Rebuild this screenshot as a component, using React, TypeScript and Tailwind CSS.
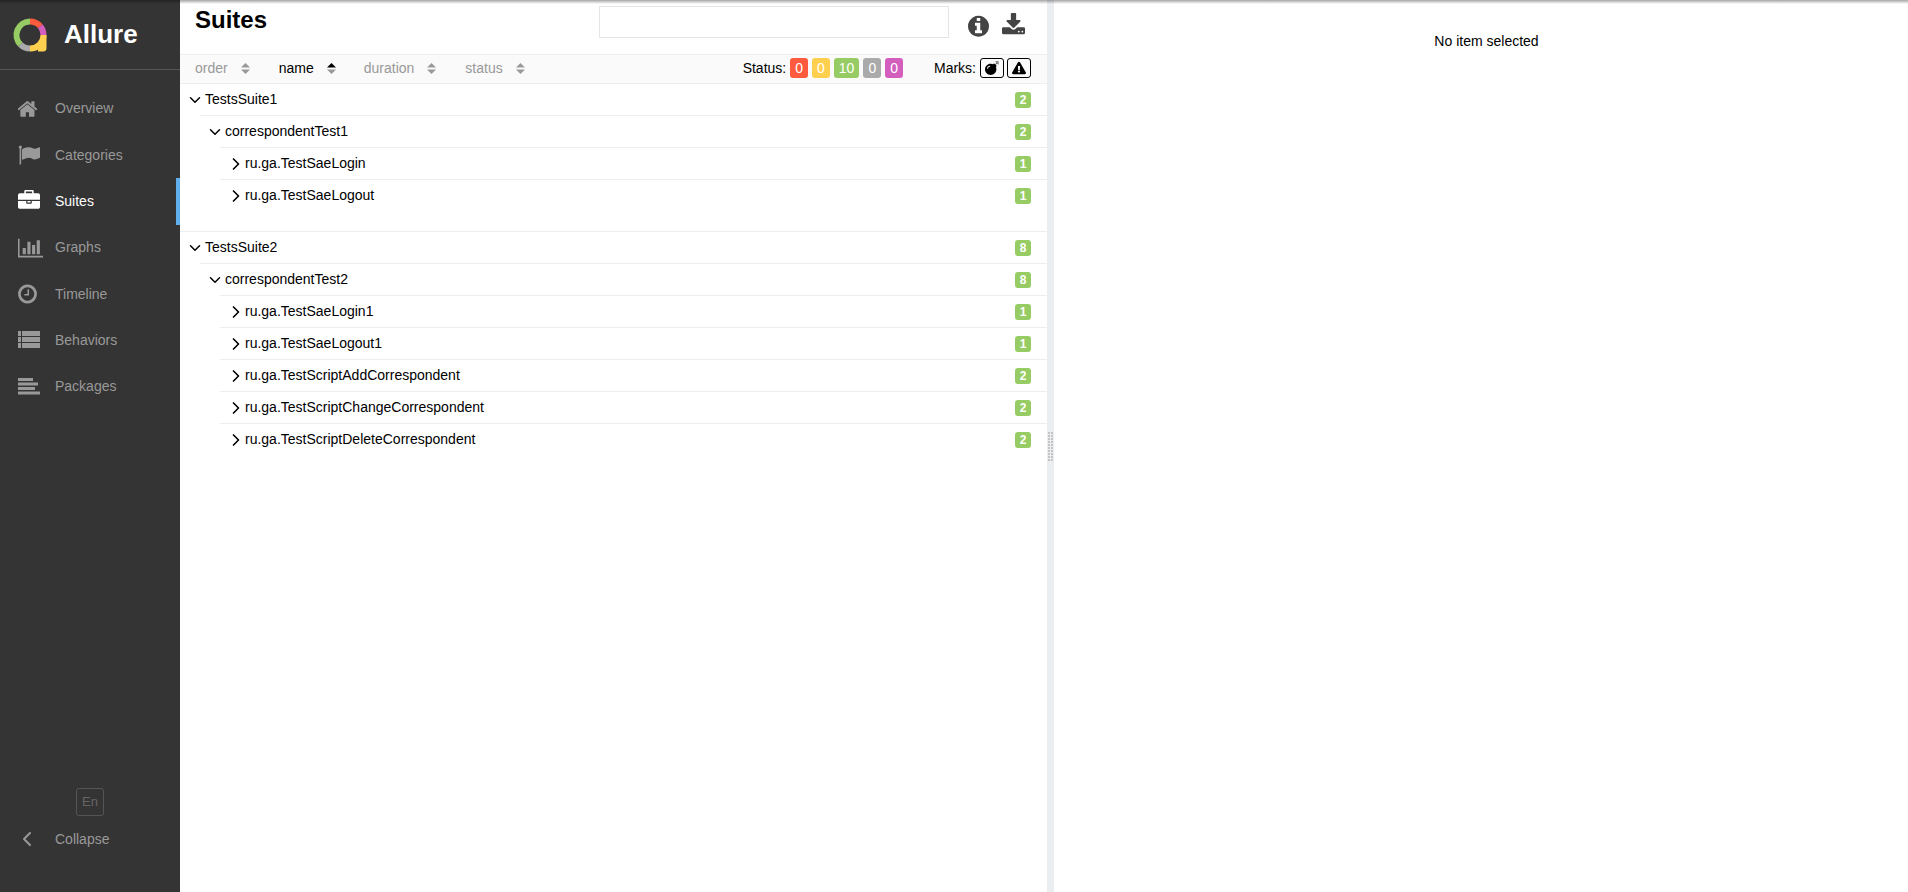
import type { ReactNode } from "react"
import { FaBomb, FaExclamationTriangle } from "react-icons/fa"
import { ChevronDown, ChevronLeft, ChevronRight } from "lucide-react"

function HomeIcon() {
  return (
    <svg viewBox="64 0 1664 1792" fill="currentColor" className="h-[22px] w-[20.4px]">
      <path d="M1408 992v480q0 26-19 45t-45 19h-384v-384h-256v384h-384q-26 0-45-19t-19-45v-480q0-1 .5-3t.5-3l575-474 575 474q1 2 1 6zm223-69l-62 74q-8 9-21 11h-3q-13 0-21-7l-692-577-692 577q-12 8-24 7-13-2-21-11l-62-74q-8-10-7-23.5t11-21.5l719-599q32-26 76-26t76 26l244 204v-195q0-14 9-23t23-9h192q14 0 23 9t9 23v408l219 182q10 8 11 21.5t-7 23.5z" />
    </svg>
  )
}

function FlagIcon() {
  return (
    <svg viewBox="0 0 1792 1792" fill="currentColor" className="h-[22px] w-[22px]">
      <path d="M320 256q0 72-64 110v1266q0 13-9.5 22.5t-22.5 9.5h-64q-13 0-22.5-9.5t-9.5-22.5v-1266q-64-38-64-110 0-53 37.5-90.5t90.5-37.5 90.5 37.5 37.5 90.5zm1472 64v763q0 25-12.5 38.5t-39.5 27.5q-215 116-369 116-61 0-123.5-22t-108.5-48-115.5-48-142.5-22q-192 0-464 146-17 9-33 9-26 0-45-19t-19-45v-742q0-32 31-55 21-14 79-43 236-120 421-120 107 0 200 29t219 88q38 19 88 19 54 0 117.5-21t110-47 88-47 54.5-21q26 0 45 19t19 45z" />
    </svg>
  )
}

function BriefcaseIcon() {
  return (
    <svg viewBox="0 0 1792 1792" fill="currentColor" className="h-[22px] w-[22px]">
      <path d="M640 256h512v-128h-512v128zm1152 640v480q0 66-47 113t-113 47h-1472q-66 0-113-47t-47-113v-480h672v160q0 26 19 45t45 19h320q26 0 45-19t19-45v-160h672zm-768 0v128h-256v-128h256zm768-480v384h-1792v-384q0-66 47-113t113-47h352v-160q0-40 28-68t68-28h576q40 0 68 28t28 68v160h352q66 0 113 47t47 113z" />
    </svg>
  )
}

function GraphIcon() {
  return (
    <svg viewBox="0 0 2048 1792" fill="currentColor" className="h-[22px] w-[25px]">
      <path d="M640 896v512h-256v-512h256zm384-512v1024h-256v-1024h256zm1024 1152v128h-2048v-1536h128v1408h1920zm-640-896v768h-256v-768h256zm384-384v1152h-256v-1152h256z" />
    </svg>
  )
}

function ClockIcon() {
  return (
    <svg viewBox="128 0 1536 1792" fill="currentColor" className="h-[22px] w-[19px]">
      <path d="M1024 544v448q0 14-9 23t-23 9h-320q-14 0-23-9t-9-23v-64q0-14 9-23t23-9h224v-352q0-14 9-23t23-9h64q14 0 23 9t9 23zm416 352q0-148-73-273t-198-198-273-73-273 73-198 198-73 273 73 273 198 198 273 73 273-73 198-198 73-273zm224 0q0 209-103 385.5t-279.5 279.5-385.5 103-385.5-103-279.5-279.5-103-385.5 103-385.5 279.5-279.5 385.5-103 385.5 103 279.5 279.5 103 385.5z" />
    </svg>
  )
}

function ListIcon() {
  return (
    <svg viewBox="0 0 22 18" fill="currentColor" className="h-[18px] w-[22px]">
      <rect x="0" y="0" width="3" height="5" />
      <rect x="4" y="0" width="18" height="5" />
      <rect x="0" y="6" width="3" height="5" />
      <rect x="4" y="6" width="18" height="5" />
      <rect x="0" y="12" width="3" height="5" />
      <rect x="4" y="12" width="18" height="5" />
    </svg>
  )
}

function PackagesIcon() {
  return (
    <svg viewBox="0 0 22 18" fill="currentColor" className="h-[18px] w-[22px]">
      <rect x="0" y="0" width="15" height="3" />
      <rect x="0" y="4.5" width="20" height="3" />
      <rect x="0" y="9" width="17" height="3" />
      <rect x="0" y="13.5" width="22" height="3" />
    </svg>
  )
}

function InfoIcon() {
  return (
    <svg viewBox="128 0 1536 1792" fill="currentColor" className="ml-[19px] mt-[14px] h-[24.5px] w-[21px] text-[#444444]">
      <path d="M1152 1376v-160q0-14-9-23t-23-9h-96v-512q0-14-9-23t-23-9h-320q-14 0-23 9t-9 23v160q0 14 9 23t23 9h96v320h-96q-14 0-23 9t-9 23v160q0 14 9 23t23 9h448q14 0 23-9t9-23zm-128-896v-160q0-14-9-23t-23-9h-192q-14 0-23 9t-9 23v160q0 14 9 23t23 9h192q14 0 23-9t9-23zm640 416q0 209-103 385.5t-279.5 279.5-385.5 103-385.5-103-279.5-279.5-103-385.5 103-385.5 279.5-279.5 385.5-103 385.5 103 279.5 279.5 103 385.5z" />
    </svg>
  )
}

function DownloadIcon() {
  return (
    <svg viewBox="64 0 1664 1792" fill="currentColor" className="ml-[13px] mt-[13px] h-[24.8px] w-[23px] text-[#444444]">
      <path d="M1344 1344q0-26-19-45t-45-19-45 19-19 45 19 45 45 19 45-19 19-45zm256 0q0-26-19-45t-45-19-45 19-19 45 19 45 45 19 45-19 19-45zm128-224v320q0 40-28 68t-68 28h-1472q-40 0-68-28t-28-68v-320q0-40 28-68t68-28h465l135 136q58 56 136 56t136-56l136-136h464q40 0 68 28t28 68zm-325-569q17 41-14 70l-448 448q-18 19-45 19t-45-19l-448-448q-31-29-14-70 17-39 59-39h256v-448q0-26 19-45t45-19h256q26 0 45 19t19 45v448h256q42 0 59 39z" />
    </svg>
  )
}

const navItems = [
  { label: "Overview", icon: <HomeIcon /> },
  { label: "Categories", icon: <FlagIcon /> },
  { label: "Suites", icon: <BriefcaseIcon />, active: true },
  { label: "Graphs", icon: <GraphIcon /> },
  { label: "Timeline", icon: <ClockIcon /> },
  { label: "Behaviors", icon: <ListIcon /> },
  { label: "Packages", icon: <PackagesIcon /> },
]

const sorters = [
  { label: "order", gap: "mr-[29px]" },
  { label: "name", active: true, gap: "mr-[28px]" },
  { label: "duration", gap: "mr-[29px]" },
  { label: "status", gap: "mr-[28px]" },
]

const statuses = [
  { value: 0, color: "bg-[#fd5a3e]" },
  { value: 0, color: "bg-[#ffd050]" },
  { value: 10, color: "bg-[#97cc64]" },
  { value: 0, color: "bg-[#aaaaaa]" },
  { value: 0, color: "bg-[#d35ebe]" },
]

function Logo() {
  return (
    <svg viewBox="0 0 36 36" className="h-[36px] w-[36px] shrink-0">
      <path d="M18 4.5 A13.5 13.5 0 0 1 28.3 9.3" fill="none" stroke="#fd5a3e" strokeWidth="6" />
      <path d="M28.3 9.3 A13.5 13.5 0 0 1 31.5 18" fill="none" stroke="#d35ebe" strokeWidth="6" />
      <path d="M31.5 18 A13.5 13.5 0 0 1 18 31.5" fill="none" stroke="#ffd050" strokeWidth="6" />
      <path d="M34.5 18 L34.5 31 Q34.5 34.5 31 34.5 L26 34.5 L26 28 Z" fill="#ffd050" />
      <path d="M18 31.5 A13.5 13.5 0 0 1 8.3 27.4" fill="none" stroke="#aaaaaa" strokeWidth="6" />
      <path d="M8.3 27.4 A13.5 13.5 0 0 1 18 4.5" fill="none" stroke="#97cc64" strokeWidth="6" />
    </svg>
  )
}

function SortIcon({ active, gap }: { active?: boolean; gap: string }) {
  return (
    <svg viewBox="0 0 10 12" className={`ml-[13px] h-[11px] w-[9px] shrink-0 ${gap}`}>
      <path d="M5 0 L10 5 L0 5 Z" fill={active ? "#000000" : "#999999"} />
      <path d="M0 7 L10 7 L5 12 Z" fill="#999999" />
    </svg>
  )
}

function TreeRow({ level, label, count, open }: { level: 0 | 1 | 2; label: string; count: number; open?: boolean }) {
  const indent = level === 0 ? "ml-0 pl-[10px]" : level === 1 ? "ml-[20px] pl-[10px]" : "ml-[40px] pl-[10px]"
  return (
    <div className={`flex h-[32px] items-center border-t border-[#eeeeee] pr-[16px] ${indent}`}>
      <span className="flex w-[15px] shrink-0 items-center">
        {open ? (
          <ChevronDown className="ml-[-4px] h-[18px] w-[18px] shrink-0" strokeWidth={2} />
        ) : (
          <ChevronRight className="ml-[-4px] h-[20px] w-[20px] shrink-0" strokeWidth={2} />
        )}
      </span>
      <span className="flex-1 text-[14px]">{label}</span>
      <span className="flex h-[16px] w-[16px] items-center justify-center rounded-[3px] bg-[#97cc64] text-[12px] font-bold text-white">
        {count}
      </span>
    </div>
  )
}

function Sidebar() {
  return (
    <aside className="flex h-full w-[180px] shrink-0 flex-col bg-[#343434] text-[14px] text-[#999999]">
      <div className="flex h-[70px] items-center gap-[17px] border-b border-[#555555] pl-[12px]">
        <Logo />
        <span className="ml-[-1px] text-[26px] font-bold text-white">Allure</span>
      </div>
      <nav className="mt-[15.7px] flex flex-col">
        {navItems.map((item) => (
          <div
            key={item.label}
            className={`flex h-[46.3px] items-center border-r-4 ${
              item.active ? "border-[#5fafec] text-white" : "border-transparent"
            }`}
          >
            <span className="flex w-[55px] shrink-0 items-center pl-[18px]">{item.icon}</span>
            <span>{item.label}</span>
          </div>
        ))}
      </nav>
      <div className="mt-auto flex flex-col pb-[39px]">
        <div className="mb-[9px] ml-[76px] flex h-[28px] w-[28px] items-center justify-center rounded-[3px] border border-[#555555] text-[13px] text-[#666666]">
          En
        </div>
        <div className="flex h-[28px] items-center">
          <span className="flex w-[55px] shrink-0 pl-[15px]">
            <ChevronLeft className="h-[24px] w-[24px]" strokeWidth={2} />
          </span>
          <span>Collapse</span>
        </div>
      </div>
    </aside>
  )
}

function Badge({ color, children }: { color: string; children: ReactNode }) {
  return (
    <span className={`flex h-[20px] items-center rounded-[3px] px-[5px] text-white ${color}`}>{children}</span>
  )
}

function SuitesPane() {
  return (
    <section className="h-full w-[867px] shrink-0 text-[14px] text-black">
      <header className="flex h-[54px] items-start pl-[15px] pr-[22px]">
        <h1 className="text-[24px] font-bold leading-[40px]">Suites</h1>
        <div className="ml-auto mt-[6px] h-[32px] w-[350px] border border-[#e5e5e5]" />
        <InfoIcon />
        <DownloadIcon />
      </header>
      <div className="flex h-[29px] items-center border-t border-[#eeeeee] bg-[#fafafa] pb-[2px] pl-[15px] pr-[16px]">
        {sorters.map((sorter) => (
          <div key={sorter.label} className={`flex items-center ${sorter.active ? "text-black" : "text-[#999999]"}`}>
            <span>{sorter.label}</span>
            <SortIcon active={sorter.active} gap={sorter.gap} />
          </div>
        ))}
        <span className="ml-auto mr-[4px]">Status:</span>
        <div className="flex gap-[4px]">
          {statuses.map((status, index) => (
            <Badge key={index} color={status.color}>
              {status.value}
            </Badge>
          ))}
        </div>
        <span className="ml-[31px] mr-[4px]">Marks:</span>
        <div className="flex gap-[3px]">
          <span className="flex h-[20px] w-[24px] items-center justify-center rounded-[3px] border border-black">
            <FaBomb className="h-[14px] w-[14px]" />
          </span>
          <span className="flex h-[20px] w-[24px] items-center justify-center rounded-[3px] border border-black">
            <FaExclamationTriangle className="h-[14px] w-[14px]" />
          </span>
        </div>
      </div>
      <div>
        <div className="mb-[20px]">
          <TreeRow level={0} open label="TestsSuite1" count={2} />
          <TreeRow level={1} open label="correspondentTest1" count={2} />
          <TreeRow level={2} label="ru.ga.TestSaeLogin" count={1} />
          <TreeRow level={2} label="ru.ga.TestSaeLogout" count={1} />
        </div>
        <div>
          <TreeRow level={0} open label="TestsSuite2" count={8} />
          <TreeRow level={1} open label="correspondentTest2" count={8} />
          <TreeRow level={2} label="ru.ga.TestSaeLogin1" count={1} />
          <TreeRow level={2} label="ru.ga.TestSaeLogout1" count={1} />
          <TreeRow level={2} label="ru.ga.TestScriptAddCorrespondent" count={2} />
          <TreeRow level={2} label="ru.ga.TestScriptChangeCorrespondent" count={2} />
          <TreeRow level={2} label="ru.ga.TestScriptDeleteCorrespondent" count={2} />
        </div>
      </div>
    </section>
  )
}

function Splitter() {
  return (
    <div className="flex h-full w-[7px] shrink-0 items-center justify-center bg-[#ebeef1]">
      <div className="grid grid-cols-2 gap-[1px]">
        {Array.from({ length: 20 }).map((_, index) => (
          <span key={index} className="h-[2px] w-[2px] bg-[#c4c4c4]" />
        ))}
      </div>
    </div>
  )
}

export default function App() {
  return (
    <div className="relative flex h-screen w-full overflow-hidden bg-white font-['Liberation_Sans',Arial,sans-serif]">
      <Sidebar />
      <SuitesPane />
      <Splitter />
      <main className="flex-1 pl-[11px] pt-[33px] text-center text-[14px] leading-[16px] text-black">No item selected</main>
      <div className="absolute inset-x-0 top-0 h-[4px] bg-gradient-to-b from-[#00000059] to-transparent" />
    </div>
  )
}
